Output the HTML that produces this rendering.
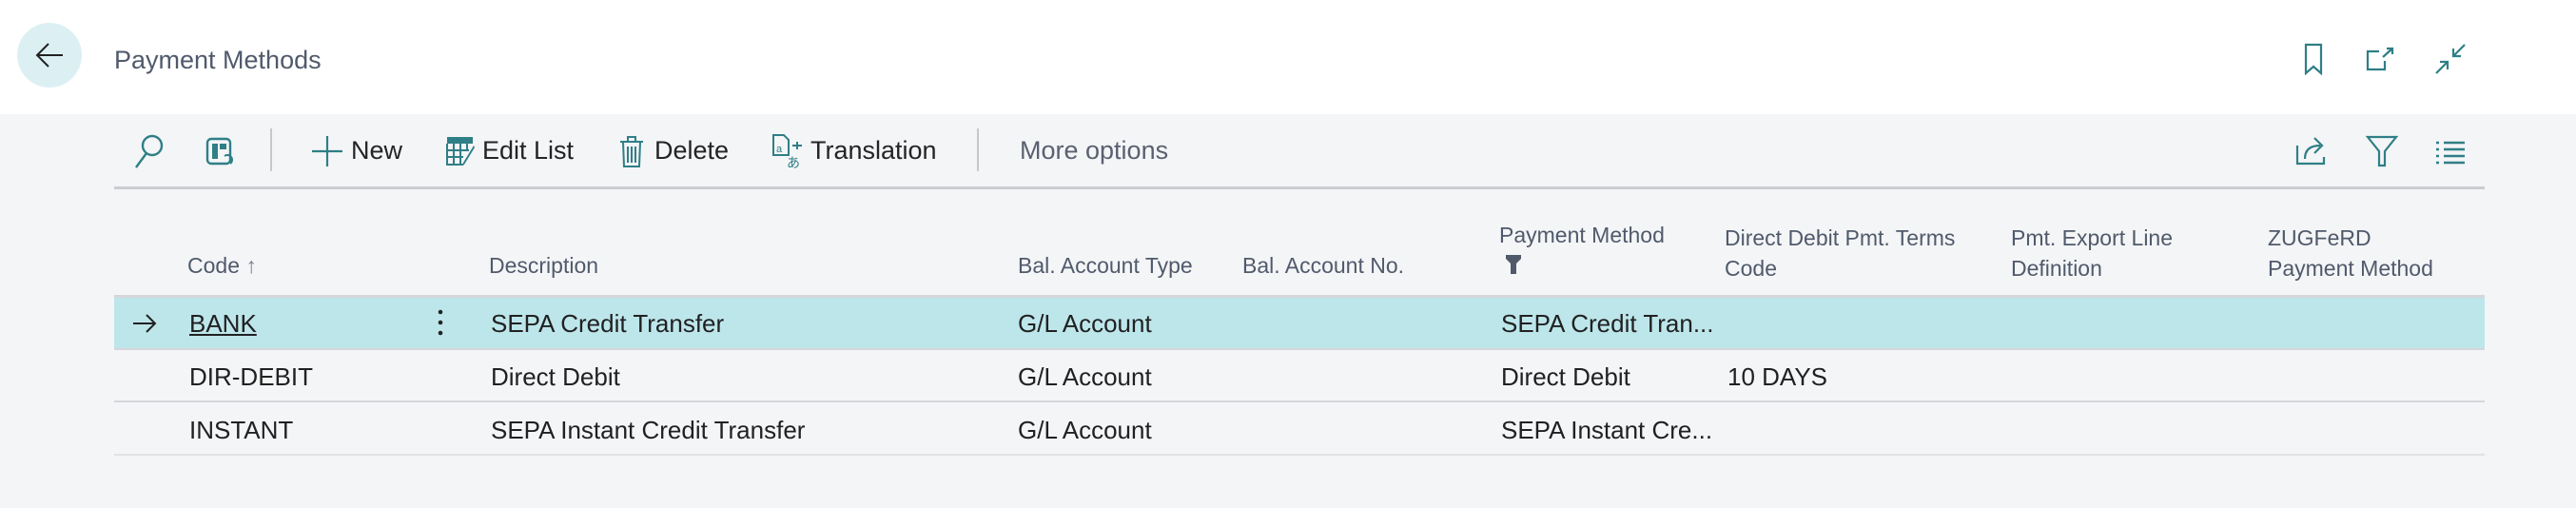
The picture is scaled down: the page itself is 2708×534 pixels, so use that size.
<!DOCTYPE html>
<html><head><meta charset="utf-8"><style>
*{margin:0;padding:0;box-sizing:border-box}
body{width:2708px;height:534px;background:#f4f5f7;font-family:"Liberation Sans",sans-serif;position:relative;overflow:hidden;color:#212121}
.a{position:absolute;white-space:nowrap}
.hdr{left:0;top:0;width:2708px;height:120px;background:#fff}
.tb{font-size:27px;color:#242424;top:143px}
.h{font-size:23px;color:#505a6b}
.c{font-size:26px;color:#212121}
svg{position:absolute;overflow:visible}
</style></head><body>
<div class="a hdr"></div>
<div class="a" style="left:18px;top:24px;width:68px;height:68px;border-radius:50%;background:#dcf0f3"></div>
<svg style="left:36px;top:42px" width="32" height="32" viewBox="0 0 32 32"><path d="M15 4 L3 16 L15 28 M3 16 H30" fill="none" stroke="#222" stroke-width="2"/></svg>
<div class="a" style="left:120px;top:48px;font-size:27px;color:#505a6b">Payment Methods</div>
<!-- header right icons -->
<svg style="left:2422px;top:46px" width="20" height="32" viewBox="0 0 20 32"><path d="M2 1 H18 V31 L10 24 L2 31 Z" fill="none" stroke="#2f7f86" stroke-width="2.2"/></svg>
<svg style="left:2487px;top:50px" width="32" height="24" viewBox="0 0 32 24"><path d="M14 4 H2 V23 H20 V14 M18 10 L28 1 M22 1 H28 V7" fill="none" stroke="#2f7f86" stroke-width="2.2"/></svg>
<svg style="left:2560px;top:46px" width="32" height="32" viewBox="0 0 32 32"><path d="M31 1 L19 13 M19 5 V13 H27 M1 31 L13 19 M13 27 V19 H5" fill="none" stroke="#2f7f86" stroke-width="2.2"/></svg>
<!-- toolbar -->
<svg style="left:141px;top:141px" width="32" height="36" viewBox="0 0 32 36"><circle cx="19" cy="12" r="10" fill="none" stroke="#2f7f86" stroke-width="2.4"/><path d="M13 20 L2 35" stroke="#2f7f86" stroke-width="2.4"/></svg>
<svg style="left:216px;top:144px" width="30" height="32" viewBox="0 0 30 32"><rect x="2" y="2" width="24" height="26" rx="4" fill="none" stroke="#2f7f86" stroke-width="2.4"/><rect x="7" y="7" width="6" height="16" fill="#2f7f86"/><rect x="15" y="7" width="7" height="6" fill="#2f7f86"/><path d="M20 20 a5 5 0 0 1 6 8" fill="none" stroke="#2f7f86" stroke-width="2"/></svg>
<div class="a" style="left:284px;top:135px;width:2px;height:45px;background:#c8c8cc"></div>
<svg style="left:328px;top:143px" width="32" height="32" viewBox="0 0 32 32"><path d="M16 0 V32 M0 16 H32" stroke="#2f7f86" stroke-width="2.2"/></svg>
<div class="a tb" style="left:369px">New</div>
<svg style="left:469px;top:143px" width="34" height="32" viewBox="0 0 34 32"><path d="M1 1 H28 V8 H1 Z" fill="#2f7f86"/><path d="M1 8 V30 H18 M1 15 H24 M1 22 H18 M8 8 V30 M15 8 V30 M22 8 V14" fill="none" stroke="#2f7f86" stroke-width="2"/><path d="M30 12 L19 30 L17 31 L18 28 L29 10 Z" fill="#2f7f86"/></svg>
<div class="a tb" style="left:507px">Edit List</div>
<svg style="left:651px;top:143px" width="26" height="33" viewBox="0 0 26 33"><path d="M1 6 H25 M9 6 V1 H17 V6 M4 6 L5 32 H21 L22 6 M9 11 V28 M13 11 V28 M17 11 V28" fill="none" stroke="#2f7f86" stroke-width="2"/></svg>
<div class="a tb" style="left:688px">Delete</div>
<svg style="left:811px;top:141px" width="34" height="36" viewBox="0 0 34 36"><path d="M2 1 H13 L18 6 V22 H2 Z" fill="none" stroke="#2f7f86" stroke-width="2"/><text x="5" y="19" font-size="11" fill="#2f7f86" font-family="Liberation Sans">a</text><path d="M22 12 H32 M27 8 V16" stroke="#2f7f86" stroke-width="2"/><text x="16" y="35" font-size="14" fill="#2f7f86" font-family="Noto Sans CJK JP,sans-serif">あ</text></svg>
<div class="a tb" style="left:852px">Translation</div>
<div class="a" style="left:1027px;top:135px;width:2px;height:45px;background:#c8c8cc"></div>
<div class="a tb" style="left:1072px;color:#5a6070">More options</div>
<svg style="left:2413px;top:141px" width="34" height="33" viewBox="0 0 34 33"><path d="M2 12 V31 H30 V24" fill="none" stroke="#2f7f86" stroke-width="2.2"/><path d="M10 26 C10 16 16 12 26 12 M20 4 L28 12 L20 20" fill="none" stroke="#2f7f86" stroke-width="2.2"/></svg>
<svg style="left:2488px;top:143px" width="32" height="32" viewBox="0 0 32 32"><path d="M1 1 H31 L19 16 V31 H13 V16 Z" fill="none" stroke="#2f7f86" stroke-width="2.2"/></svg>
<svg style="left:2560px;top:148px" width="32" height="26" viewBox="0 0 32 26"><path d="M1 2 H4 M9 2 H31 M1 9 H4 M9 9 H31 M1 16 H4 M9 16 H31 M1 23 H4 M9 23 H31" stroke="#2f7f86" stroke-width="2.4"/></svg>
<div class="a" style="left:120px;top:196px;width:2492px;height:3px;background:#cbcbd0"></div>
<!-- headers -->
<div class="a h" style="left:197px;top:266px">Code <span style="color:#7a8090">↑</span></div>
<div class="a h" style="left:514px;top:266px">Description</div>
<div class="a h" style="left:1070px;top:266px">Bal. Account Type</div>
<div class="a h" style="left:1306px;top:266px">Bal. Account No.</div>
<div class="a h" style="left:1576px;top:234px">Payment Method</div>
<svg style="left:1583px;top:268px" width="16" height="20" viewBox="0 0 16 20"><path d="M0 0 H16 V4 L11 9 V20 H5 V9 L0 4 Z" fill="#505a6b"/></svg>
<div class="a h" style="left:1813px;top:234px;line-height:32px">Direct Debit Pmt. Terms<br>Code</div>
<div class="a h" style="left:2114px;top:234px;line-height:32px">Pmt. Export Line<br>Definition</div>
<div class="a h" style="left:2384px;top:234px;line-height:32px">ZUGFeRD<br>Payment Method</div>
<!-- rows -->
<div class="a" style="left:120px;top:310px;width:2492px;height:3px;background:#d6d6da"></div>
<div class="a" style="left:120px;top:313px;width:2492px;height:53px;background:#bde6eb"></div>
<div class="a" style="left:120px;top:366px;width:2492px;height:2px;background:#d6d6da"></div>
<div class="a" style="left:120px;top:421px;width:2492px;height:2px;background:#d6d6da"></div>
<div class="a" style="left:120px;top:477px;width:2492px;height:2px;background:#e2e2e6"></div>
<svg style="left:139px;top:330px" width="26" height="20" viewBox="0 0 26 20"><path d="M15 1 L24 10 L15 19 M1 10 H24" fill="none" stroke="#222" stroke-width="2"/></svg>
<svg style="left:459px;top:325px" width="8" height="30"><circle cx="4" cy="3" r="2.3" fill="#222"/><circle cx="4" cy="14" r="2.3" fill="#222"/><circle cx="4" cy="25" r="2.3" fill="#222"/></svg>
<div class="a c" style="left:199px;top:325px;text-decoration:underline">BANK</div>
<div class="a c" style="left:516px;top:325px">SEPA Credit Transfer</div>
<div class="a c" style="left:1070px;top:325px">G/L Account</div>
<div class="a c" style="left:1578px;top:325px">SEPA Credit Tran...</div>
<div class="a c" style="left:199px;top:381px">DIR-DEBIT</div>
<div class="a c" style="left:516px;top:381px">Direct Debit</div>
<div class="a c" style="left:1070px;top:381px">G/L Account</div>
<div class="a c" style="left:1578px;top:381px">Direct Debit</div>
<div class="a c" style="left:1816px;top:381px">10 DAYS</div>
<div class="a c" style="left:199px;top:437px">INSTANT</div>
<div class="a c" style="left:516px;top:437px">SEPA Instant Credit Transfer</div>
<div class="a c" style="left:1070px;top:437px">G/L Account</div>
<div class="a c" style="left:1578px;top:437px">SEPA Instant Cre...</div>
</body></html>
